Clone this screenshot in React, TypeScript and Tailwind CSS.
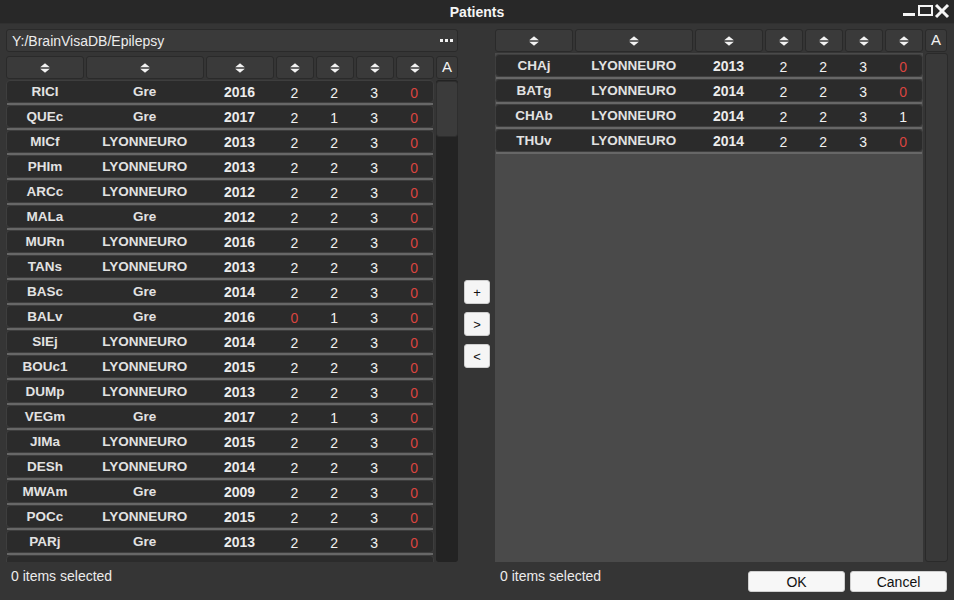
import React from "react";

type Row = [string, string, string, string, string, string, string];

const leftRows: Row[] = [
  ["RICI", "Gre", "2016", "2", "2", "3", "0"],
  ["QUEc", "Gre", "2017", "2", "1", "3", "0"],
  ["MICf", "LYONNEURO", "2013", "2", "2", "3", "0"],
  ["PHIm", "LYONNEURO", "2013", "2", "2", "3", "0"],
  ["ARCc", "LYONNEURO", "2012", "2", "2", "3", "0"],
  ["MALa", "Gre", "2012", "2", "2", "3", "0"],
  ["MURn", "LYONNEURO", "2016", "2", "2", "3", "0"],
  ["TANs", "LYONNEURO", "2013", "2", "2", "3", "0"],
  ["BASc", "Gre", "2014", "2", "2", "3", "0"],
  ["BALv", "Gre", "2016", "0", "1", "3", "0"],
  ["SIEj", "LYONNEURO", "2014", "2", "2", "3", "0"],
  ["BOUc1", "LYONNEURO", "2015", "2", "2", "3", "0"],
  ["DUMp", "LYONNEURO", "2013", "2", "2", "3", "0"],
  ["VEGm", "Gre", "2017", "2", "1", "3", "0"],
  ["JIMa", "LYONNEURO", "2015", "2", "2", "3", "0"],
  ["DESh", "LYONNEURO", "2014", "2", "2", "3", "0"],
  ["MWAm", "Gre", "2009", "2", "2", "3", "0"],
  ["POCc", "LYONNEURO", "2015", "2", "2", "3", "0"],
  ["PARj", "Gre", "2013", "2", "2", "3", "0"],
  ["COUi", "Gre", "2015", "2", "2", "3", "0"],
];

const rightRows: Row[] = [
  ["CHAj", "LYONNEURO", "2013", "2", "2", "3", "0"],
  ["BATg", "LYONNEURO", "2014", "2", "2", "3", "0"],
  ["CHAb", "LYONNEURO", "2014", "2", "2", "3", "1"],
  ["THUv", "LYONNEURO", "2014", "2", "2", "3", "0"],
];

const widths = ["w-[78px]", "w-[118px]", "w-[68px]", "w-[38px]", "w-[38px]", "w-[38px]", "w-[38px]"];

function SortIcon() {
  return (
    <svg width="10" height="10" viewBox="0 0 10 10">
      <polygon points="5,0.3 9.8,4.2 0.2,4.2" fill="#f2f2f2" />
      <polygon points="0.2,5.8 9.8,5.8 5,9.7" fill="#f2f2f2" />
    </svg>
  );
}

function Header() {
  return (
    <div className="flex gap-[2px] h-[23px]">
      {widths.map((w, i) => (
        <div
          key={i}
          className={`${w} h-full flex items-center justify-center bg-[#3a3a3a] border border-[#2a2a2a] rounded-[3px]`}
        >
          <SortIcon />
        </div>
      ))}
      <div className="w-[22px] h-full flex items-center justify-center bg-[#3a3a3a] border border-[#2a2a2a] rounded-[3px] text-[15px] text-[#f2f2f2]">
        A
      </div>
    </div>
  );
}

function DataRow({ r }: { r: Row }) {
  return (
    <div className="flex flex-col shrink-0">
      <div className="h-[23px] flex gap-[2px] bg-[#2b2b2b] border border-[#3e3e3e] rounded-[4px] items-center">
        {r.map((v, i) => {
          const isNum = i >= 3;
          const red = isNum && v === "0";
          return (
            <div
              key={i}
              className={`${widths[i]} ${i === 0 ? "-ml-[1px]" : ""} text-center leading-[16px] ${
                isNum ? "text-[14px] font-normal pt-[2px]" : i === 2 ? "text-[14px] font-bold text-[#ececec]" : "text-[13.5px] font-bold text-[#e2e2e2]"
              } ${red ? "text-[#d9443f]" : isNum ? "text-[#f2f2f2]" : ""}`}
            >
              {v}
            </div>
          );
        })}
      </div>
      <div className="h-[2px] mx-[1px] bg-[#676767]" />
    </div>
  );
}

export default function App() {
  return (
    <div className="w-[954px] h-[600px] bg-[#353535] flex flex-col overflow-hidden font-['Liberation_Sans',Arial,sans-serif] text-[#e6e6e6]">
      {/* Title bar */}
      <div className="relative h-[24px] shrink-0 bg-[#282828] border-b border-[#303030] flex items-center justify-center">
        <span className="text-[14px] font-bold text-[#f5f5f5] leading-none">Patients</span>
        <svg className="absolute right-[3px] top-[2px]" width="50" height="18" viewBox="0 0 50 18">
          <rect x="2" y="11" width="12" height="3" fill="#f5f5f5" />
          <rect x="18" y="4" width="13" height="9" fill="none" stroke="#f5f5f5" strokeWidth="2" />
          <rect x="17" y="3" width="15" height="2" fill="#f5f5f5" />
          <line x1="35" y1="3" x2="47" y2="15" stroke="#f5f5f5" strokeWidth="3" />
          <line x1="47" y1="3" x2="35" y2="15" stroke="#f5f5f5" strokeWidth="3" />
        </svg>
      </div>

      {/* Body */}
      <div className="flex-1 flex flex-col px-[6px] pt-[5px]">
        <div className="flex h-[533px] shrink-0">
          {/* Left column */}
          <div className="w-[452px] flex flex-col">
            <div className="h-[23px] shrink-0 flex items-center justify-between bg-[#3a3a3a] border border-[#2a2a2a] rounded-[3px] pl-[5px] pr-[4px]">
              <span className="text-[14px] text-[#ececec] leading-none">Y:/BrainVisaDB/Epilepsy</span>
              <svg width="13" height="4" viewBox="0 0 13 4">
                <rect x="0" y="0" width="3" height="3" fill="#f0f0f0" />
                <rect x="5" y="0" width="3" height="3" fill="#f0f0f0" />
                <rect x="10" y="0" width="3" height="3" fill="#f0f0f0" />
              </svg>
            </div>
            <div className="mt-[4px]">
              <Header />
            </div>
            <div className="mt-[1px] flex-1 flex gap-[2px] overflow-hidden">
              <div className="w-[428px] flex flex-col overflow-hidden">
                {leftRows.map((r, i) => (
                  <DataRow key={i} r={r} />
                ))}
              </div>
              <div className="w-[22px] bg-[#232323] rounded-[3px] flex flex-col">
                <div className="mt-[1px] h-[56px] bg-[#3b3b3b] border border-[#2e2e2e] rounded-[3px]" />
              </div>
            </div>
          </div>

          {/* Middle buttons */}
          <div className="w-[37px] flex flex-col items-start pl-[6px] pt-[251px] gap-[8px]">
            {["+", ">", "<"].map((b) => (
              <div
                key={b}
                className="w-[26px] h-[24px] bg-[#f5f5f5] border border-[#cfcfcf] rounded-[3px] flex items-center justify-center text-[13px] text-[#111] leading-none"
              >
                {b}
              </div>
            ))}
          </div>

          {/* Right column */}
          <div className="w-[453px] flex flex-col">
            <Header />
            <div className="mt-[1px] flex-1 flex gap-[2px]">
              <div className="w-[428px] bg-[#4a4a4a] flex flex-col pt-[1px] overflow-hidden">
                {rightRows.map((r, i) => (
                  <DataRow key={i} r={r} />
                ))}
              </div>
              <div className="w-[23px] bg-[#393939] border border-[#2a2a2a] rounded-[3px]" />
            </div>
          </div>
        </div>

        {/* Bottom bar */}
        <div className="flex flex-1">
          <div className="w-[452px] pl-[5px] pt-[6px] text-[14px] leading-[16px] text-[#ececec]">0 items selected</div>
          <div className="w-[37px]" />
          <div className="w-[453px] flex">
            <div className="pl-[5px] pt-[6px] text-[14px] leading-[16px] text-[#ececec]">0 items selected</div>
            <div className="ml-auto mr-[1px] mt-[9px] flex gap-[5px] h-[21px]">
              <div className="w-[97px] h-[21px] bg-[#f7f7f7] border border-[#cfcfcf] rounded-[3px] flex items-center justify-center text-[14px] text-[#111] leading-none">
                OK
              </div>
              <div className="w-[97px] h-[21px] bg-[#f7f7f7] border border-[#cfcfcf] rounded-[3px] flex items-center justify-center text-[14px] text-[#111] leading-none">
                Cancel
              </div>
            </div>
          </div>
        </div>
      </div>
    </div>
  );
}
